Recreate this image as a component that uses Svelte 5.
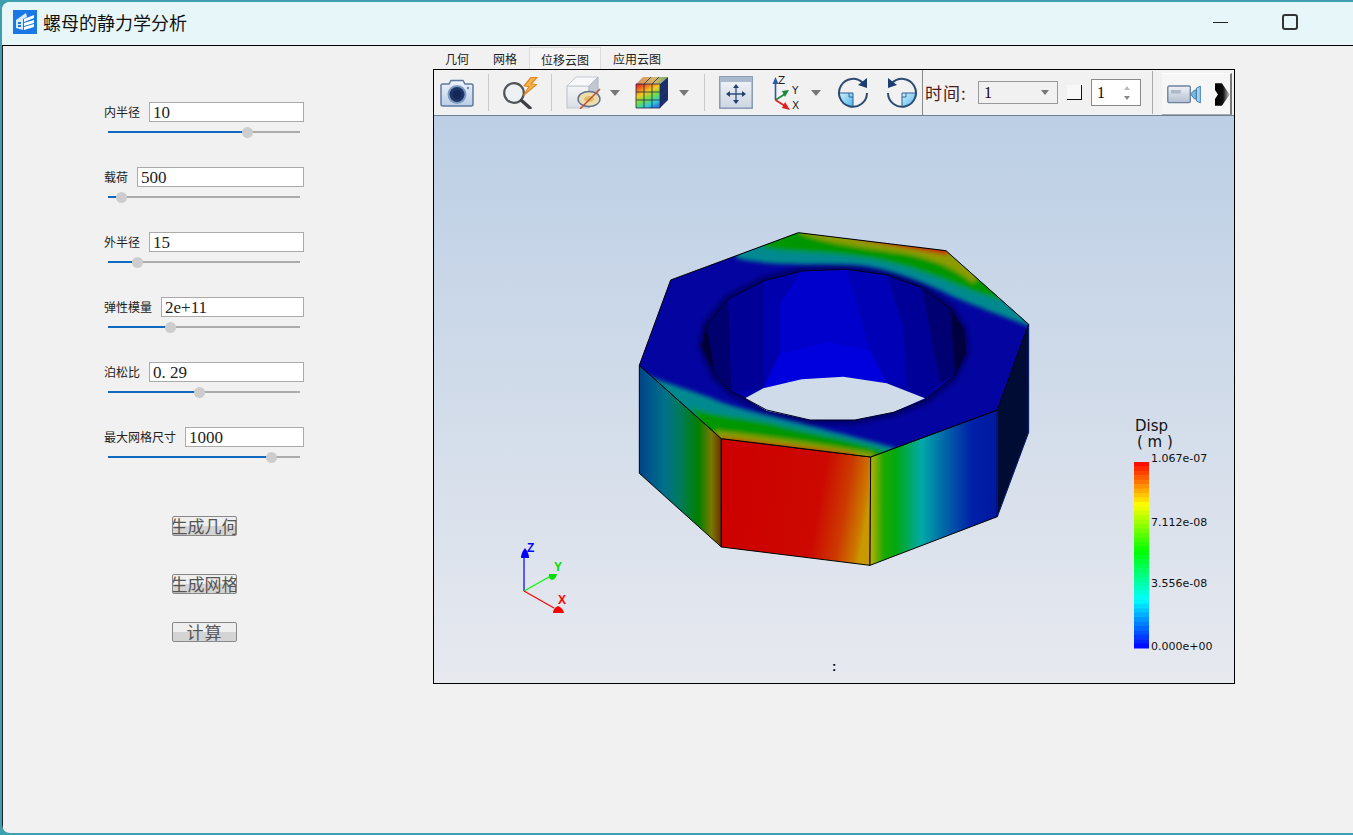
<script>
const params = [
	{ label: "内半径", value: "10", knob: 72.4 },
	{ label: "载荷", value: "500", knob: 6.8 },
	{ label: "外半径", value: "15", knob: 15.6 },
	{ label: "弹性模量", value: "2e+11", knob: 32.8 },
	{ label: "泊松比", value: "0. 29", knob: 47.4 },
	{ label: "最大网格尺寸", value: "1000", knob: 85 }
];

const tabs = ["几何", "网格", "位移云图", "应用云图"];

// colour ramp of the legend, top to bottom
const stops = [
	[0, [255, 0, 0]],
	[0.23, [255, 255, 0]],
	[0.48, [0, 255, 0]],
	[0.74, [0, 255, 255]],
	[1, [0, 0, 255]]
];

function ramp(t) {
	for (let i = 1; i < stops.length; i++) {
		if (t <= stops[i][0]) {
			const [t0, c0] = stops[i - 1];
			const [t1, c1] = stops[i];
			const k = (t - t0) / (t1 - t0);
			const c = c0.map((v, n) => Math.round(v + (c1[n] - v) * k));
			return `rgb(${c.join(",")})`;
		}
	}
	return "rgb(0,0,255)";
}

const bandCount = 42;
const bands = Array.from({ length: bandCount }, (_, i) => ({
	y: 462 + (i * 186) / bandCount,
	fill: ramp((i + 0.5) / bandCount)
}));

const ticks = [
	{ y: 462, text: "1.067e-07" },
	{ y: 526, text: "7.112e-08" },
	{ y: 587, text: "3.556e-08" },
	{ y: 650, text: "0.000e+00" }
];

// inside wall of the nut, one polygon per shaded facet
const facets = [
	{ p: "247,378 260,315 290,470", f: "#000038" },
	{ p: "260,315 325,237 335,515 285,465", f: "#00006e" },
	{ p: "325,237 430,183 430,505 335,515", f: "#000096" },
	{ p: "430,183 545,153 480,250 480,400 430,505", f: "#0000ac" },
	{ p: "545,153 680,148 750,390 625,365 480,400 480,250", f: "#0000cc" },
	{ p: "625,365 750,390 800,490 670,470 550,478 430,505 480,400", f: "#0000de" },
	{ p: "680,148 800,165 850,320 860,500 800,490 750,390", f: "#0000b6" },
	{ p: "800,165 905,203 960,490 915,540 860,500 850,320", f: "#000098" },
	{ p: "905,203 990,265 1005,465 960,490", f: "#000072" },
	{ p: "990,265 1030,330 1035,400 1005,465", f: "#000040" }
];

const rim = "247,378 260,315 325,237 430,183 545,153 680,148 800,165 905,203 990,265 1030,330 1035,400 1000,470 915,540 820,577 705,600 570,600 440,570 375,535 335,515 285,465";
const through = "375,535 430,505 545,478 670,470 800,490 915,535 820,577 705,600 570,600 440,572";
const topFace = "535,38 978,92 1226,313 1132,570 752,711 304,656 58,436 152,180";
</script>

<div class="desktop">
	<div class="window">
		<header class="titlebar">
			<svg class="logo" viewBox="0 0 24 24" width="24" height="24">
				<rect width="24" height="24" fill="#1a78e6" />
				<path d="M3 10 L10 5 L13 3 L14 7 L10 9 L10 20 L3 18 Z" fill="#dcebfb" />
				<path d="M11 9 L21 5 V8 L11 12 Z M11 13 L21 10 V13 L11 16 Z M11 17 L21 14 V17 L11 20 Z" fill="#fff" />
				<path d="M5 12 H8 V14 H5 Z M5 15 H8 V17 H5 Z" fill="#1a78e6" />
			</svg>
			<span class="title">螺母的静力学分析</span>
			<span class="min"></span>
			<span class="max"></span>
		</header>

		<main class="content">
			<section class="panel">
				{#each params as row}
					<div class="row">
						<div class="field">
							<span class="label">{row.label}</span>
							<span class="input">{row.value}</span>
						</div>
						<div class="slider">
							<div class="fill" style="width: {row.knob}%"></div>
							<div class="knob" style="left: {row.knob}%"></div>
						</div>
					</div>
				{/each}
				<div class="btn first"><span>生成几何</span></div>
				<div class="btn second"><span>生成网格</span></div>
				<div class="btn third"><span>计算</span></div>
			</section>

			<section class="viewer">
				<nav class="tabs">
					{#each tabs as tab, i}
						<span class="tab" class:active={i == 2}>{tab}</span>
					{/each}
				</nav>
				<div class="frame">
					<div class="toolbar">
						<svg class="ml6" width="34" height="28" viewBox="0 0 34 28">
							<defs>
								<linearGradient id="camBody" x1="0" y1="0" x2="0" y2="1">
									<stop offset="0" stop-color="#eef4fb" />
									<stop offset="1" stop-color="#b9cde6" />
								</linearGradient>
							</defs>
							<path d="M2.5 5 H9 L11 1.5 H23 L25 5 H31.5 Q33 5 33 7 V25 Q33 27 31 27 H3 Q1 27 1 25 V7 Q1 5 2.5 5 Z" fill="url(#camBody)" stroke="#5f789f" stroke-width="1.5" />
							<circle cx="17" cy="15.5" r="9.5" fill="#7f9cc4" />
							<circle cx="17" cy="15.5" r="7.5" fill="#1f3567" />
							<circle cx="17" cy="15.5" r="4.5" fill="#14285a" />
							<circle cx="28" cy="9" r="1.2" fill="#6c86ad" />
						</svg>
						<i class="sep ml14"></i>
						<svg class="ml14" width="35" height="32" viewBox="0 0 35 32">
							<circle cx="11" cy="16" r="9.8" fill="#edf1f3" stroke="#505458" stroke-width="2.2" />
							<path d="M18.5 23.5 L27 31" stroke="#3c4046" stroke-width="3.4" stroke-linecap="round" />
							<path d="M28 0.5 L21 9 L26 9.5 L21 18 L33.5 7.5 L28 7 L34 0.5 Z" fill="#f6b44a" stroke="#e08a26" stroke-width="1.2" stroke-linejoin="round" />
						</svg>
						<i class="sep ml13"></i>
						<svg class="ml14" width="35" height="33" viewBox="0 0 35 33">
							<defs>
								<linearGradient id="boxFront" x1="0" y1="0" x2="0" y2="1">
									<stop offset="0" stop-color="#f4f5f7" />
									<stop offset="1" stop-color="#d9dde4" />
								</linearGradient>
							</defs>
							<path d="M1 10 H23 V32 H1 Z" fill="url(#boxFront)" stroke="#c2c8d2" stroke-width="1.2" />
							<path d="M1 10 L10 1 H32 L23 10 Z" fill="#f8f8fa" stroke="#c2c8d2" />
							<path d="M23 10 V32 L32 22 V1 Z" fill="#c2c8d3" stroke="#b0b8c4" />
							<ellipse cx="23" cy="23" rx="11" ry="7.5" fill="#eedcac" stroke="#5d7190" stroke-width="1.4" />
							<ellipse cx="23" cy="23" rx="5" ry="3" fill="#dcbc6c" />
							<path d="M14 33 L34 13" stroke="#c4492a" stroke-width="1.4" />
						</svg>
						<i class="arrow ml9"></i>
						<svg class="ml15" width="33" height="33" viewBox="0 0 33 33">
							<defs>
								<linearGradient id="heat" x1="0.2" y1="0" x2="0.7" y2="1">
									<stop offset="0" stop-color="#e8301e" />
									<stop offset="0.35" stop-color="#f6c81f" />
									<stop offset="0.6" stop-color="#6fdc4a" />
									<stop offset="0.85" stop-color="#30c8dc" />
									<stop offset="1" stop-color="#2a7fe0" />
								</linearGradient>
								<linearGradient id="lid" x1="0" y1="0" x2="1" y2="0">
									<stop offset="0" stop-color="#e0905a" />
									<stop offset="0.6" stop-color="#d6b868" />
									<stop offset="1" stop-color="#68a870" />
								</linearGradient>
							</defs>
							<path d="M1 8 L8 1 H33 L25 8 Z" fill="url(#lid)" />
							<path d="M25 8 L33 1 V24 L25 32 Z" fill="#1c2f70" />
							<rect x="1" y="8" width="24" height="24" fill="url(#heat)" />
							<path d="M9 8 V32 M17 8 V32 M1 16 H25 M1 24 H25 M1 8 H25 V32 H1 Z M9 8 L16 1 M17 8 L24 1 M25 16 L33 9 M25 24 L33 17" stroke="#1c2a4a" stroke-width="0.8" fill="none" />
						</svg>
						<i class="arrow ml11"></i>
						<i class="sep ml15"></i>
						<svg class="ml14" width="34" height="33" viewBox="0 0 34 33">
							<defs>
								<linearGradient id="panBg" x1="0" y1="0" x2="0" y2="1">
									<stop offset="0" stop-color="#f3f5f8" />
									<stop offset="1" stop-color="#cdd6e2" />
								</linearGradient>
							</defs>
							<rect x="0.8" y="0.8" width="32.4" height="31.4" fill="url(#panBg)" stroke="#7f93b0" stroke-width="1.4" />
							<rect x="1" y="1" width="32" height="5" fill="#aab9ce" />
							<path d="M17 10 V26 M9 18 H25" stroke="#2c4f80" stroke-width="1.3" />
							<path d="M17 8 L14 12 H20 Z M17 28 L14 24 H20 Z M7 18 L11 15 V21 Z M27 18 L23 15 V21 Z" fill="#20406f" />
						</svg>
						<svg class="ml19" width="27" height="36" viewBox="0 0 27 36">
							<path d="M3.5 25 V8" stroke="#2a56b0" stroke-width="1.6" />
							<path d="M3.5 2 L0.5 9 H6.5 Z" fill="#2a56b0" />
							<path d="M3.5 25 L13 19" stroke="#1a8a3a" stroke-width="1.6" />
							<path d="M17 15 L10 16 L13 22 Z" fill="#1a8a3a" />
							<path d="M3.5 25 L13 31" stroke="#e02020" stroke-width="1.6" />
							<path d="M18 35 L10 33 L13 27 Z" fill="#e02020" />
							<text x="6" y="9" class="axis">Z</text>
							<text x="20" y="18.5" class="axis">Y</text>
							<text x="20" y="34" class="axis">X</text>
						</svg>
						<i class="arrow ml12"></i>
						<svg class="ml16" width="32" height="32" viewBox="0 0 32 32">
							<defs>
								<linearGradient id="quad" x1="0" y1="0" x2="1" y2="1">
									<stop offset="0" stop-color="#d8f0fc" />
									<stop offset="1" stop-color="#48b4ec" />
								</linearGradient>
							</defs>
							<path d="M2 16 H16 V30 A14 14 0 0 1 2 16 Z" fill="url(#quad)" />
							<path d="M12 16 V20 H16" fill="none" stroke="#2a5f96" stroke-width="0.9" />
							<path d="M2 16 H16 V30" fill="none" stroke="#2a5f96" stroke-width="1" />
							<path d="M26 6 A14 14 0 1 0 30 16" fill="none" stroke="#2b4a6f" stroke-width="2" />
							<path d="M30 1 L30 11 L21 8 Z" fill="#1d3f70" />
						</svg>
						<svg class="ml17" width="32" height="32" viewBox="0 0 32 32">
							<path d="M16 16 H30 A14 14 0 0 1 16 30 Z" fill="url(#quad)" />
							<path d="M20 16 V20 H16" fill="none" stroke="#2a5f96" stroke-width="0.9" />
							<path d="M30 16 H16 V30" fill="none" stroke="#2a5f96" stroke-width="1" />
							<path d="M6 6 A14 14 0 1 1 2 16" fill="none" stroke="#2b4a6f" stroke-width="2" />
							<path d="M2 1 L2 11 L11 8 Z" fill="#1d3f70" />
						</svg>
						<i class="vline ml4"></i>
						<span class="time ml2">时间:</span>
						<div class="combo ml11">
							<span>1</span>
							<i class="arrow small"></i>
						</div>
						<i class="check ml9"></i>
						<div class="spin ml9">
							<span>1</span>
							<div class="spinner">
								<i class="up"></i>
								<i class="down"></i>
							</div>
						</div>
						<i class="sep tall ml11"></i>
						<div class="raised ml9">
							<svg width="35" height="19" viewBox="0 0 35 19">
								<defs>
									<linearGradient id="camera" x1="0" y1="0" x2="0" y2="1">
										<stop offset="0" stop-color="#f0f2f6" />
										<stop offset="1" stop-color="#b3bfd1" />
									</linearGradient>
								</defs>
								<rect x="0.8" y="0.8" width="23" height="17" rx="1.5" fill="url(#camera)" stroke="#6d819f" stroke-width="1.4" />
								<rect x="4" y="5" width="10" height="3.5" fill="#aeb8c6" />
								<path d="M24 9 L28 5 H30 V14 H28 Z" fill="#7bb6dd" stroke="#3f7bac" />
								<path d="M30 3 L34 1 V18 L30 16 Z" fill="#a4d3ef" stroke="#3f7bac" />
							</svg>
							<svg class="chevron" width="15" height="23" viewBox="0 0 15 23">
								<defs>
									<linearGradient id="fade" x1="0" y1="0" x2="1" y2="0">
										<stop offset="0" stop-color="#000" />
										<stop offset="0.55" stop-color="#111" />
										<stop offset="1" stop-color="#ccc" />
									</linearGradient>
								</defs>
								<path d="M0 0 H7 L15 11.5 L7 23 H0 V16 L3 11.5 L0 7 Z" fill="url(#fade)" />
							</svg>
						</div>
					</div>

					<svg class="scene" width="800" height="567" viewBox="434 116 800 567">
						<defs>
							<linearGradient id="sky" x1="0" y1="0" x2="0" y2="1">
								<stop offset="0" stop-color="#bccfe5" />
								<stop offset="1" stop-color="#e7e9ef" />
							</linearGradient>
							<linearGradient id="faceA" gradientUnits="userSpaceOnUse" x1="58" y1="0" x2="304" y2="0">
								<stop offset="0" stop-color="#004488" />
								<stop offset="0.3" stop-color="#00708c" />
								<stop offset="0.5" stop-color="#007a5a" />
								<stop offset="0.72" stop-color="#008000" />
								<stop offset="0.88" stop-color="#7a7800" />
								<stop offset="1" stop-color="#6a3000" />
							</linearGradient>
							<linearGradient id="faceB" gradientUnits="userSpaceOnUse" x1="304" y1="800" x2="744" y2="879">
								<stop offset="0" stop-color="#cc0000" />
								<stop offset="0.66" stop-color="#cc0800" />
								<stop offset="0.84" stop-color="#cc3a00" />
								<stop offset="0.96" stop-color="#cc7800" />
								<stop offset="1" stop-color="#c89a00" />
							</linearGradient>
							<linearGradient id="faceC" gradientUnits="userSpaceOnUse" x1="752" y1="0" x2="1132" y2="0">
								<stop offset="0" stop-color="#b8b000" />
								<stop offset="0.1" stop-color="#20a800" />
								<stop offset="0.2" stop-color="#00a810" />
								<stop offset="0.4" stop-color="#00aaa8" />
								<stop offset="0.6" stop-color="#0060a8" />
								<stop offset="0.8" stop-color="#0020a8" />
								<stop offset="1" stop-color="#0018a0" />
							</linearGradient>
							<clipPath id="topClip">
								<polygon points={topFace} />
							</clipPath>
							<filter id="soft" x="-20%" y="-20%" width="140%" height="140%">
								<feGaussianBlur stdDeviation="7" />
							</filter>
						</defs>
						<rect x="434" y="116" width="800" height="567" fill="url(#sky)" />

						<g transform="translate(620 220) scale(0.33333)">
							<polygon points="58,436 304,656 304,981 58,760" fill="url(#faceA)" stroke="#000" stroke-width="3" />
							<polygon points="304,656 752,711 750,1036 304,981" fill="url(#faceB)" stroke="#000" stroke-width="3" />
							<polygon points="752,711 1132,570 1132,890 750,1036" fill="url(#faceC)" stroke="#000" stroke-width="3" />
							<polygon points="1132,570 1226,313 1226,637 1132,890" fill="#000c34" stroke="#001a70" stroke-width="3" />

							<g clip-path="url(#topClip)">
								<rect x="0" y="0" width="1260" height="760" fill="#0404a0" />
								<polygon points={rim} fill="none" stroke="#000070" stroke-width="28" filter="url(#soft)" />
								<g filter="url(#soft)">
									<path d="M60 455 C130 490 220 510 300 545 C400 580 560 610 830 685 L760 760 L300 720 Z" fill="#008a90" />
									<path d="M210 560 C280 590 400 592 500 622 C600 645 700 660 800 695 L750 760 L300 720 Z" fill="#009600" />
									<path d="M285 632 C350 640 500 655 760 700 L750 760 L304 720 Z" fill="#8c9c00" />
									<path d="M304 652 C400 663 520 676 700 700 L750 760 L300 720 Z" fill="#c03000" />

									<path d="M350 115 C450 140 600 130 700 135 C800 140 920 190 1000 230 C1080 265 1170 295 1240 325 L1240 -40 L300 -40 Z" fill="#008a90" />
									<path d="M430 85 C520 100 620 95 720 112 C850 128 960 175 1060 215 L1140 240 L1240 -40 L400 -40 Z" fill="#009600" />
									<path d="M540 40 C620 70 720 82 850 100 C930 115 1000 140 1060 190 L1120 90 L600 -40 Z" fill="#8c9c00" />
									<path d="M700 55 C800 75 900 92 985 106 L990 40 L700 20 Z" fill="#c02000" />
								</g>
							</g>
							<polygon points={topFace} fill="none" stroke="#000" stroke-width="3" />

							<polygon points={rim} fill="#0000a8" />
							{#each facets as facet}
								<polygon points={facet.p} fill={facet.f} />
							{/each}
							<polygon points={through} fill="#cfdbe9" />
							<polygon points={rim} fill="none" stroke="#000020" stroke-width="3" />
						</g>

						<!-- axis triad -->
						<path d="M524 591 V556" stroke="#0000ff" stroke-width="1.2" />
						<path d="M525 548 Q529 553 529 558 H521 Q521 553 525 548 Z" fill="#0000ff" />
						<path d="M524 591 L549 577" stroke="#00ff00" stroke-width="1.2" />
						<path d="M557 574 L549 574 Q548 579 552 580 Q556 579 557 574 Z" fill="#00e000" />
						<path d="M524 591 L554 608" stroke="#ff0000" stroke-width="1.2" />
						<path d="M558 606 Q563 608 564 613 H553 Q553 608 558 606 Z" fill="#ff0000" />
						<text x="527" y="552" class="tri blue">Z</text>
						<text x="554" y="571" class="tri green">Y</text>
						<text x="558" y="604" class="tri red">X</text>

						<!-- legend -->
						<text x="1135" y="431" class="legend-title">Disp</text>
						<text x="1137" y="447" class="legend-title">( m )</text>
						{#each bands as band}
							<rect x="1134" y={band.y} width="15" height={186 / bandCount + 0.5} fill={band.fill} />
						{/each}
						{#each ticks as tick}
							<text x="1151" y={tick.y} class="tick">{tick.text}</text>
						{/each}
						<text x="832" y="671" class="colon">:</text>
					</svg>
				</div>
			</section>
		</main>
	</div>
</div>

<style>
:global(body) {
	margin: 0;
}

.desktop {
	width: 1353px;
	height: 835px;
	box-sizing: border-box;
	padding: 2px 0 2px 2px;
	background: #3f9fae;
	overflow: hidden;
}

.window {
	height: 831px;
	display: flex;
	flex-direction: column;
	border-radius: 8px 0 0 8px;
	overflow: hidden;
	background: #f1f1f1;
}

.titlebar {
	height: 43px;
	flex: none;
	box-sizing: content-box;
	display: flex;
	align-items: center;
	background: #e6f6f9;
	border-bottom: 1px solid #000;
	padding: 0 0 0 11px;
}

.logo {
	flex: none;
	margin-top: -3px;
}

.title {
	margin: -4px 0 0 6px;
	font: 18px "Noto Sans CJK SC", sans-serif;
	color: #111;
}

.min {
	width: 15px;
	height: 1px;
	background: #222;
	margin: -3px 0 0 1026px;
}

.max {
	width: 12px;
	height: 12px;
	margin: -3px 0 0 54px;
	border: 2px solid #333;
	border-radius: 3px;
	box-sizing: content-box;
}

.content {
	flex: 1;
	display: flex;
	border-left: 1px solid #222;
}

.panel {
	width: 430px;
	flex: none;
	box-sizing: border-box;
	padding: 56px 129px 0 101px;
}

.row {
	height: 37px;
	margin-bottom: 28px;
}

.field {
	display: flex;
	gap: 9px;
	align-items: center;
	height: 20px;
}

.label {
	font: 12px/20px "Noto Sans CJK SC", sans-serif;
	color: #222;
	white-space: nowrap;
}

.input {
	flex: 1;
	height: 20px;
	box-sizing: border-box;
	border: 1px solid #aaa;
	background: #fff;
	padding-left: 3px;
	font: 17px/20px "Liberation Serif", serif;
	color: #222;
	white-space: pre;
}

.slider {
	position: relative;
	margin: 9px 4px 0;
	height: 2px;
	background: #ababab;
}

.fill {
	height: 2px;
	background: #1068bf;
}

.knob {
	position: absolute;
	top: -4.5px;
	width: 11px;
	height: 11px;
	margin-left: -5.5px;
	border-radius: 50%;
	background: #cdcdcd;
}

.btn {
	width: 65px;
	height: 20px;
	box-sizing: border-box;
	margin-left: 68px;
	display: flex;
	justify-content: center;
	align-items: center;
	overflow: hidden;
	border: 1px solid #888;
	border-radius: 2px;
	background: linear-gradient(#efefef 50%, #d4d4d4 50%);
	font: 17px/18px "Noto Sans CJK SC", sans-serif;
	color: #555;
	white-space: nowrap;
}

.btn span {
	flex: none;
}

.btn.first {
	margin-top: 52px;
}

.btn.second {
	margin-top: 38px;
}

.btn.third {
	margin-top: 28px;
	letter-spacing: 1px;
	overflow: visible;
}

.viewer {
	width: 802px;
	flex: none;
}

.tabs {
	height: 23px;
	display: flex;
	align-items: flex-end;
}

.tab {
	padding: 0 12px;
	height: 22px;
	box-sizing: border-box;
	font: 12px/24px "Noto Sans CJK SC", sans-serif;
	color: #222;
}

.tab.active {
	background: #f5f5f5;
	border: 1px solid #dcdcdc;
	border-bottom: 0;
	padding: 0 11px;
	line-height: 23px;
}

.frame {
	width: 802px;
	height: 615px;
	box-sizing: border-box;
	border: 1px solid #000;
	display: flex;
	flex-direction: column;
}

.toolbar {
	height: 46px;
	flex: none;
	box-sizing: border-box;
	display: flex;
	align-items: center;
	background: #f1f1f1;
	border-bottom: 1px solid #6f7f96;
}

.toolbar > * {
	flex: none;
}

.ml2 { margin-left: 2px; }
.ml4 { margin-left: 4px; }
.ml6 { margin-left: 6px; }
.ml9 { margin-left: 9px; }
.ml11 { margin-left: 11px; }
.ml12 { margin-left: 12px; }
.ml13 { margin-left: 13px; }
.ml14 { margin-left: 14px; }
.ml15 { margin-left: 15px; }
.ml16 { margin-left: 16px; }
.ml17 { margin-left: 17px; }
.ml19 { margin-left: 19px; }

.sep {
	width: 1px;
	height: 37px;
	background: #c9c9c9;
}

.sep.tall {
	height: 43px;
	background: #aaa;
}

.vline {
	width: 1px;
	height: 45px;
	background: #888;
}

.arrow {
	width: 0;
	height: 0;
	border-left: 5px solid transparent;
	border-right: 5px solid transparent;
	border-top: 6px solid #777;
}

.arrow.small {
	border-left-width: 4px;
	border-right-width: 4px;
	border-top-width: 5px;
}

.axis {
	font: 10.5px "DejaVu Sans", sans-serif;
	fill: #222;
}

.time {
	width: 42px;
	font: 17px/20px "Noto Sans CJK SC", sans-serif;
	letter-spacing: 1px;
	color: #4a1c1c;
	white-space: nowrap;
}

.combo {
	width: 80px;
	height: 23px;
	box-sizing: border-box;
	border: 1px solid #999;
	padding: 0 8px 0 5px;
	display: flex;
	justify-content: space-between;
	align-items: center;
	font: 16px "Liberation Serif", serif;
	color: #200;
}

.check {
	width: 15px;
	height: 15px;
	box-sizing: border-box;
	background: #f8f8f8;
	border-right: 1px solid #111;
	border-bottom: 1px solid #111;
}

.spin {
	width: 50px;
	height: 27px;
	box-sizing: border-box;
	border: 1px solid #888;
	background: #fff;
	padding: 0 10px 0 5px;
	display: flex;
	justify-content: space-between;
	align-items: center;
	font: 16px "Liberation Serif", serif;
	color: #200;
}

.spinner {
	display: flex;
	flex-direction: column;
	gap: 6px;
}

.up,
.down {
	width: 0;
	height: 0;
	border-left: 3px solid transparent;
	border-right: 3px solid transparent;
}

.up {
	border-bottom: 4px solid #bbb;
}

.down {
	border-top: 4px solid #888;
}

.raised {
	width: 70px;
	height: 42px;
	align-self: flex-end;
	box-sizing: border-box;
	background: #f6f6f6;
	border-top: 1px solid #fff;
	border-right: 2px solid #777;
	border-bottom: 1px solid #a8a8a8;
	display: flex;
	align-items: center;
	padding-left: 5px;
}

.chevron {
	margin-left: 14px;
}

.scene {
	display: block;
	flex: none;
}

.tri {
	font: bold 12px "Liberation Sans", sans-serif;
}

.blue { fill: #0000ff; }
.green { fill: #00e000; }
.red { fill: #ff0000; }

.legend-title {
	font: 15px "DejaVu Sans", sans-serif;
	fill: #111;
}

.tick {
	font: 11px "DejaVu Sans", sans-serif;
	fill: #111;
}

.colon {
	font: bold 13px "Liberation Sans", sans-serif;
	fill: #000;
}
</style>
